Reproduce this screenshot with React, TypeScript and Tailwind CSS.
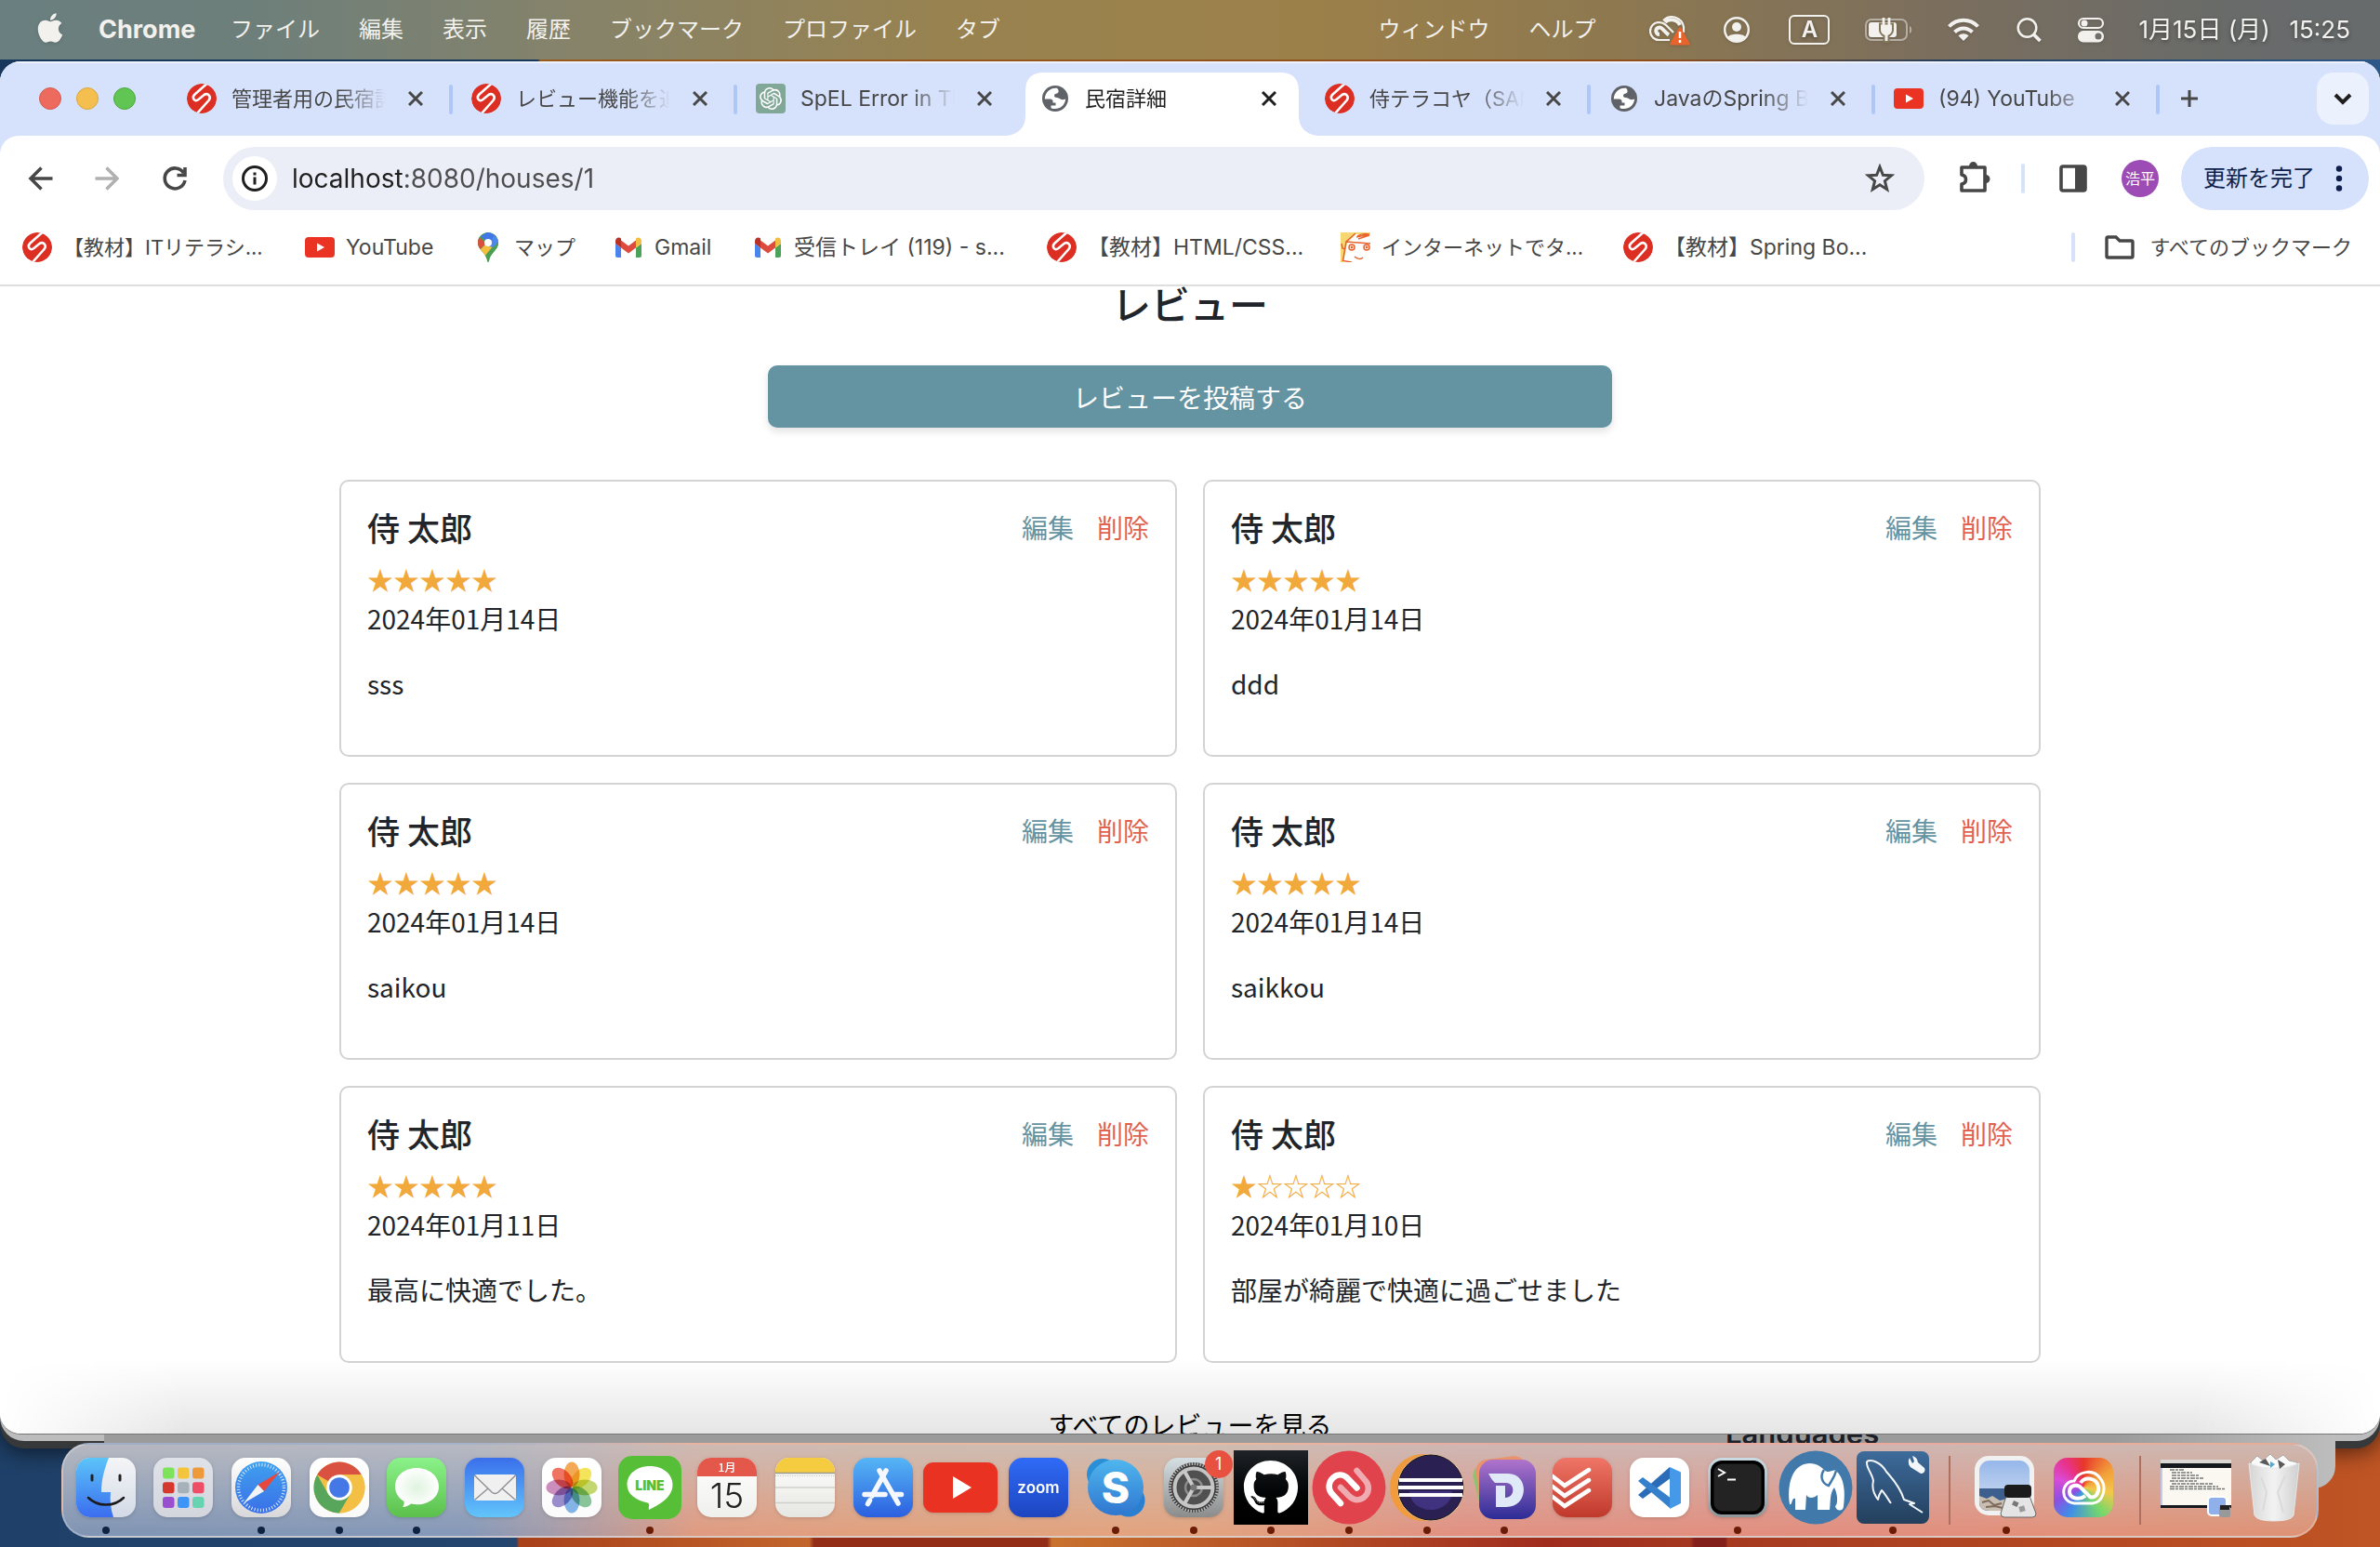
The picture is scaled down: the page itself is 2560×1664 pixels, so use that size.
import React from "react";
import { FaApple, FaGithub } from "react-icons/fa";
import { SiOpenai } from "react-icons/si";

const JP = "font-['Noto_Sans_CJK_JP',sans-serif]";
const UI = "font-[Inter,'Noto_Sans_CJK_JP',sans-serif]";

/* ---------- small icons ---------- */

const Samurai = () => (
  <svg viewBox="0 0 32 32" className="size-8 shrink-0">
    <clipPath id="sam"><circle cx="16" cy="16" r="16" /></clipPath>
    <g clipPath="url(#sam)">
      <circle cx="16" cy="16" r="16" fill="#dc2e22" />
      <path d="M21.500 0L8.500 11.500C5 15 8 20.500 12.500 17L18.500 12C23 9.500 26.500 14 23.500 18L11 32" fill="none" stroke="#fff" strokeWidth="2.600" />
    </g>
  </svg>
);

const YouTube = () => (
  <svg viewBox="0 0 32 32" className="size-8 shrink-0">
    <rect y="5" width="32" height="22" rx="4" fill="#eb3323" />
    <path d="M13 11.500v9l8-4.500z" fill="#fff" />
  </svg>
);

const OpenAi = () => (
  <span className="flex size-8 shrink-0 items-center justify-center rounded bg-[#81a798] text-2xl text-white"><SiOpenai /></span>
);

const Globe = () => (
  <svg viewBox="-2 -2 32 32" className="size-8 shrink-0">
    <circle cx="14" cy="14" r="14" fill="#5f6368" />
    <path d="M16 2.800C9 2 3 7 2.800 14.500H7.500C11 14.500 12 16 11.500 18.500H14.500V21.500H9.500V24.200C16.500 27 24.500 22.500 25.200 14.500C23 15.500 21 15.500 19.500 14.500C18 13 16 13.500 14.500 12.800C12.500 12.500 12.500 9 15 8.800C18 8.500 18.500 5.500 16 2.800Z" fill="#fff" />
  </svg>
);

const MapPin = () => (
  <svg viewBox="0 0 32 32" className="size-8 shrink-0">
    <clipPath id="pin"><path d="M16 0C10 0 5 4.700 5 11c0 4.500 2.500 7 5 10 3 3.500 4.500 6 5 9.500.3 2 1.700 2 2 0 .5-3.500 2-6 5-9.500 2.500-3 5-5.500 5-10C27 4.700 22 0 16 0z" /></clipPath>
    <g clipPath="url(#pin)">
      <rect width="32" height="32" fill="#4b9f53" />
      <path d="M4 22L23 3 27 8 12 26z" fill="#f4bf3f" />
      <path d="M4 3L14 12 6 19 3 16z" fill="#d9503f" />
      <path d="M8 4L16-1 26 4 16 12z" fill="#3f77e4" />
      <path d="M22 3L28 8 26 17 17 15z" fill="#4c87ee" />
      <path d="M27 10L12 27 20 32 30 18z" fill="#4b9f53" />
    </g>
    <circle cx="16" cy="11" r="4" fill="#fff" />
  </svg>
);

const GmailIcon = () => (
  <svg viewBox="0 0 32 32" className="size-8 shrink-0">
    <path d="M2 12l6 4.500V27H4a2 2 0 0 1-2-2z" fill="#4a84ee" />
    <path d="M30 12l-6 4.500V27h4a2 2 0 0 0 2-2z" fill="#4ba259" />
    <path d="M8 8.500l8 6 8-6v8l-8 6-8-6z" fill="#dd4b3e" />
    <path d="M2 9.500C2 6 5.500 4.500 8 6.500v10L2 12z" fill="#b93227" />
    <path d="M30 9.500C30 6 26.500 4.500 24 6.500v10L30 12z" fill="#f2bd42" />
  </svg>
);

const FaceIcon = () => (
  <svg viewBox="0 0 32 32" className="size-8 shrink-0">
    <rect width="32" height="32" fill="#f7d774" />
    <path d="M7 11L16 2H32V32H3z" fill="#fff" />
    <g fill="none" stroke="#e8642d" strokeWidth="1.500">
      <path d="M16 1L6 10 2.500 30.500 12 32M6 10L32 12M1 12l1 5 3 1" />
      <circle cx="12" cy="16" r="3" /><circle cx="28" cy="16" r="3" />
      <path d="M15 26c3 3 7 3 9 1M17 5l14-3M19 7l12-4M18 4c5-3 9-3 12-2" />
    </g>
    <circle cx="12" cy="16" r="1.400" fill="#e8642d" /><circle cx="28" cy="16" r="1.400" fill="#e8642d" />
  </svg>
);

const Stroke = ({ d, w = 4, className = "size-8 text-[#474747]", join = "miter" }: { d: string; w?: number; className?: string; join?: "miter" | "round" }) => (
  <svg viewBox="0 0 32 32" className={className} fill="none" stroke="currentColor" strokeWidth={w} strokeLinejoin={join}>
    <path d={d} />
  </svg>
);

/* ---------- menu bar ---------- */

const Menubar = () => (
  <header className={`${UI} flex h-16 shrink-0 items-center bg-[linear-gradient(90deg,#6a7f80_0%,#6e7f7a_11%,#86836a_24%,#98824f_40%,#9c804a_55%,#8d7850_68%,#7a6e5e_82%,#686b6a_94%,#686b6c_100%)] pr-8 pl-9 text-2xl text-[#f2f1ee] [text-shadow:0_2px_5px_rgba(0,0,0,0.3)]`}>
    <FaApple className="mb-1 size-9 drop-shadow" />
    <button className="ml-[34px] w-[102px] text-left text-[27px] font-bold">Chrome</button>
    <nav className="ml-10 flex gap-[42px]">
      {["ファイル", "編集", "表示", "履歴", "ブックマーク", "プロファイル", "タブ"].map((t) => <button key={t}>{t}</button>)}
    </nav>
    <nav className="ml-auto flex gap-[42px]">
      {["ウィンドウ", "ヘルプ"].map((t) => <button key={t}>{t}</button>)}
    </nav>
    <div className="ml-[58px] flex items-center drop-shadow">
      <svg viewBox="0 0 44 34" className="h-[34px] w-11" fill="none" stroke="currentColor">
        <path d="M22 28H11A9.500 9.500 0 0 1 10 9C13 9 16 10 18 12L26 20M15 7A13 13 0 0 1 37 14V20" strokeWidth="2.200" />
        <path d="M11 22C6 22 6 14.500 11 14.500C14 14.500 17 20 21 22.500M17 9C20 5 30 5 33 12" strokeWidth="4" />
        <path d="M33 16L42 32H24z" fill="#e8642c" stroke="#e8642c" strokeWidth="3" strokeLinejoin="round" />
        <path d="M33 19v7M33 28v3" stroke="#fff" strokeWidth="2.500" />
      </svg>
      <svg viewBox="0 0 28 28" className="ml-9 size-7">
        <circle cx="14" cy="14" r="12.800" fill="none" stroke="currentColor" strokeWidth="2.400" />
        <circle cx="14" cy="11" r="5" fill="currentColor" />
        <path d="M4 22C7 17.500 21 17.500 24 22C19 28.500 9 28.500 4 22Z" fill="currentColor" />
      </svg>
      <span className="ml-[42px] flex h-8 w-11 items-center justify-center rounded-md border-2 border-current text-2xl font-semibold">A</span>
      <svg viewBox="0 0 52 28" className="ml-[38px] h-7 w-[52px]" fill="none" stroke="currentColor">
        <rect x="1" y="3" width="44" height="22" rx="6" strokeWidth="2" opacity=".5" />
        <rect x="4" y="6" width="30" height="16" rx="3" fill="currentColor" stroke="none" />
        <path d="M48 10c3 1 3 7 0 8z" fill="currentColor" stroke="none" opacity=".5" />
        <path d="M17 8.500h12v6c0 3-3 5-4.500 5.500V26h-3v-6C20 19.500 17 17.500 17 14.500z" fill="#84765a" stroke="#84765a" strokeWidth="4" />
        <path d="M20 1v8M26 1v8" strokeWidth="2.800" />
        <path d="M17 8.500h12v6c0 3-3 5-4.500 5.500V26h-3v-6C20 19.500 17 17.500 17 14.500z" fill="currentColor" stroke="none" />
      </svg>
      <svg viewBox="0 0 36 26" className="ml-[36px] h-[26px] w-9" fill="none" stroke="currentColor" strokeWidth="4">
        <path d="M2.500 9.500C11 .500 25 .500 33.500 9.500M8.500 15.500c5.500-5.500 13.500-5.500 19 0" />
        <path d="M12.500 19.500c3-3 8-3 11 0L18 25z" fill="currentColor" stroke="none" />
      </svg>
      <svg viewBox="0 0 28 28" className="ml-[38px] size-7" fill="none" stroke="currentColor">
        <circle cx="12.500" cy="12" r="9.800" strokeWidth="2.500" /><path d="M19.500 19l7 7" strokeWidth="3.800" />
      </svg>
      <svg viewBox="0 0 30 28" className="ml-[38px] h-7 w-[30px]">
        <rect x="2" y="2" width="26" height="10" rx="5" fill="none" stroke="currentColor" strokeWidth="2.200" />
        <circle cx="8" cy="7" r="3.500" fill="currentColor" />
        <rect x="1" y="15" width="28" height="12.500" rx="6" fill="currentColor" />
        <circle cx="23" cy="21" r="3.500" fill="#72706a" />
      </svg>
      <span className="ml-9 w-[146px] whitespace-nowrap text-[26px]">1月15日 (月)</span>
      <span className="ml-4 text-[26px]">15:25</span>
    </div>
  </header>
);

/* ---------- browser chrome ---------- */

type Tab = { icon: React.ReactNode; title: string; active?: boolean; sep?: boolean; latin?: boolean };
const tabs: Tab[] = [
  { icon: <Samurai />, title: "管理者用の民宿詳細", sep: true },
  { icon: <Samurai />, title: "レビュー機能を追加", sep: true },
  { icon: <OpenAi />, title: "SpEL Error in Thymeleaf", latin: true },
  { icon: <Globe />, title: "民宿詳細", active: true },
  { icon: <Samurai />, title: "侍テラコヤ（SAMURAI", sep: true },
  { icon: <Globe />, title: "JavaのSpring Boot", sep: true, latin: true },
  { icon: <YouTube />, title: "(94) YouTube", sep: true, latin: true },
];

const TabItem = ({ t }: { t: Tab }) => (
  <div className={`relative flex w-[306px] min-w-0 items-center self-stretch ${t.active ? "text-[#1f1f1f]" : "text-[#474747]"}`}>
    {t.active && (
      <svg viewBox="0 0 334 68" className="absolute -left-4 top-3 h-[68px] w-[334px]" fill="#fff">
        <path d="M0 68C14 66 20 58 20 46V20Q20 0 40 0H294Q314 0 314 20V46C314 58 320 66 334 68Z" />
      </svg>
    )}
    <button className="relative flex h-14 min-w-0 flex-1 items-center gap-4 pl-5 text-left">
      {t.icon}
      <span className={`w-[166px] overflow-hidden whitespace-nowrap [mask-image:linear-gradient(90deg,#000_70%,transparent_100%)] ${t.latin ? "text-[23px]" : "text-[22px]"}`}>{t.title}</span>
    </button>
    <button aria-label="閉じる" className="relative mr-8"><Stroke d="M2 2L30 30M30 2L2 30" w={6} className="size-4" /></button>
    {t.sep && <span className="absolute right-0 top-[25px] h-8 w-1 rounded bg-[#aec7f7]" />}
  </div>
);

const TabStrip = () => (
  <div className="flex h-20 shrink-0 items-center bg-[#d6e1fb] pr-3 shadow-[inset_0_2px_0_#eef2fd]">
    <div className="flex w-[181px] shrink-0 gap-4 pl-[42px]">
      <button aria-label="閉じる" className="size-6 rounded-full border border-[#d65a50] bg-[#ed6a5e]" />
      <button aria-label="しまう" className="size-6 rounded-full border border-[#d9a73f] bg-[#f5bf4f]" />
      <button aria-label="拡大" className="size-6 rounded-full border border-[#4ea73f] bg-[#61c554]" />
    </div>
    {tabs.map((t) => <TabItem key={t.title} t={t} />)}
    <button aria-label="新しいタブ" className="ml-5"><Stroke d="M16 4V28M4 16H28" w={4} className="size-6 text-[#474747]" /></button>
    <button aria-label="タブを検索" className="ml-auto flex size-14 items-center justify-center rounded-[18px] bg-[#ecf2fd] text-[#1f1f1f]">
      <Stroke d="M8 12L16 20L24 12" w={4} className="size-8" />
    </button>
  </div>
);

const Toolbar = () => (
  <div className="bg-[#d6e1fb]">
    <div className="flex h-[92px] items-center rounded-t-[20px] bg-white pr-3 pl-7 text-[#474747]">
      <button aria-label="戻る"><Stroke d="M28.500 16H6M16.500 4.500L5 16L16.500 27.500" w={3.500} /></button>
      <button aria-label="進む" className="ml-[39px]"><Stroke d="M3.500 16H26M15.500 4.500L27 16L15.500 27.500" w={3.500} className="size-8 text-[#b0b0b0]" /></button>
      <button aria-label="再読み込み" className="ml-[41px]"><Stroke d="M25.500 10A11 11 0 1 0 27 18M27 4V12.500H18.500" w={3.600} /></button>
      <div className="ml-9 flex h-[68px] flex-1 items-center rounded-full bg-[#ebeef7] pr-8 pl-[10px]">
        <button aria-label="サイト情報" className="flex size-12 shrink-0 items-center justify-center rounded-full bg-white text-[#1f1f1f]">
          <svg viewBox="0 0 28 28" className="size-7" fill="none" stroke="currentColor" strokeWidth="3">
            <circle cx="14" cy="14" r="12.500" /><path d="M14 12.500v8M14 7.500v3" />
          </svg>
        </button>
        <input aria-label="アドレス" defaultValue="localhost:8080/houses/1" className="ml-4 h-12 flex-1 bg-[linear-gradient(90deg,#1f1f1f_120px,#4d4d50_120px)] bg-clip-text text-[28px] text-transparent outline-none" />
        <button aria-label="ブックマークに追加"><Stroke d="M16 3.500L19.400 12.200L28.500 12.700L21.400 18.700L23.700 27.700L16 22.800L8.300 27.700L10.600 18.700L3.500 12.700L12.600 12.200Z" w={3} /></button>
      </div>
      <button aria-label="拡張機能" className="ml-8">
        <svg viewBox="0 0 40 40" className="size-10">
          <path d="M8 8H33V33H8V26C14 25 14 17 8 16Z" fill="none" stroke="currentColor" strokeWidth="3.600" strokeLinejoin="round" />
          <path d="M16 7a4.500 5 0 0 1 9 0zM34 16a4.500 4.500 0 0 1 0 9z" fill="currentColor" />
        </svg>
      </button>
      <span className="ml-8 h-8 w-1 rounded bg-[#d6e1fb]" />
      <button aria-label="サイドパネル" className="ml-[37px]">
        <svg viewBox="0 0 30 30" className="size-[30px]"><rect x="2" y="2" width="26" height="26" rx="2" fill="none" stroke="currentColor" strokeWidth="3.600" /><path d="M17 2h11v26H17z" fill="currentColor" /></svg>
      </button>
      <button className="ml-[37px] flex size-10 items-center justify-center rounded-full bg-[#9c4cb4] text-[16px] text-white">浩平</button>
      <button className="ml-6 flex h-[68px] w-[202px] items-center rounded-full bg-[#d6e1fb] pl-6 text-2xl text-[#0f1f4b]">
        更新を完了
        <svg viewBox="0 0 8 28" className="ml-[22px] h-7 w-2" fill="currentColor"><circle cx="4" cy="3.500" r="3.200" /><circle cx="4" cy="14" r="3.200" /><circle cx="4" cy="24.500" r="3.200" /></svg>
      </button>
    </div>
  </div>
);

const bookmarks = [
  { icon: <Samurai />, t: "【教材】ITリテラシ...", w: "w-[262px]" },
  { icon: <YouTube />, t: "YouTube", w: "w-[139px] text-[23px]" },
  { icon: <MapPin />, t: "マップ", w: "w-[109px]" },
  { icon: <GmailIcon />, t: "Gmail", w: "w-[108px] text-[23px]" },
  { icon: <GmailIcon />, t: "受信トレイ (119) - s...", w: "w-[274px] text-[23px]" },
  { icon: <Samurai />, t: "【教材】HTML/CSS...", w: "w-[274px] text-[23px]" },
  { icon: <FaceIcon />, t: "インターネットでタ...", w: "w-[262px]" },
  { icon: <Samurai />, t: "【教材】Spring Bo...", w: "w-[262px] text-[23px]" },
];

const Bookmarks = () => (
  <nav className="flex h-[70px] shrink-0 items-center gap-[42px] border-b-2 border-[#dfdfdf] bg-white pr-[30px] pb-3 pl-6 text-[22px] text-[#474747]">
    {bookmarks.map((b) => (
      <a key={b.t} href="#" className={`flex items-center gap-3 whitespace-nowrap ${b.w}`}>{b.icon}<span>{b.t}</span></a>
    ))}
    <div className="ml-auto flex items-center">
      <span className="h-8 w-1 rounded bg-[#d6e1fb]" />
      <button className="ml-8 flex items-center gap-4">
        <Stroke d="M2 6.500Q2 5 3.500 5H12L16 9H28.500Q30 9 30 10.500V25.500Q30 27 28.500 27H3.500Q2 27 2 25.500Z" w={3.400} />
        すべてのブックマーク
      </button>
    </div>
  </nav>
);

/* ---------- page ---------- */

const reviews = [
  { stars: 5, date: "2024年01月14日", text: "sss" },
  { stars: 5, date: "2024年01月14日", text: "ddd" },
  { stars: 5, date: "2024年01月14日", text: "saikou" },
  { stars: 5, date: "2024年01月14日", text: "saikkou" },
  { stars: 5, date: "2024年01月11日", text: "最高に快適でした。" },
  { stars: 1, date: "2024年01月10日", text: "部屋が綺麗で快適に過ごせました" },
];

const Page = () => (
  <main className={`${JP} relative min-h-0 flex-1 overflow-hidden bg-white text-[28px] leading-[42px] text-[#212529]`}>
    <div className="mx-auto flex max-w-[1830px] flex-col items-center">
      <h2 className="mt-[-7px] text-[42px] leading-[50px] font-medium">レビュー</h2>
      <button className="mt-[42px] h-[67px] w-[908px] rounded-[10px] bg-[#6493a1] text-white shadow-[0_4px_8px_rgba(0,0,0,0.12)]">レビューを投稿する</button>
      <div className="mt-14 grid w-full grid-cols-2 gap-x-7 gap-y-[28px]">
        {reviews.map((r, i) => (
          <article key={i} className="rounded-[10px] border-2 border-[#d3d3d4] px-[28px] pt-7 pb-14">
            <div className="flex items-center justify-between">
              <h3 className="text-[35px] font-medium">侍 太郎</h3>
              <div className="flex gap-[25px]">
                <a href="#" className="text-[#6493a1]">編集</a>
                <a href="#" className="text-[#e2624f]">削除</a>
              </div>
            </div>
            <p className="mt-3.5 text-[#f2a93b]">{"★".repeat(r.stars) + "☆".repeat(5 - r.stars)}</p>
            <p>{r.date}</p>
            <p className="mt-7">{r.text}</p>
          </article>
        ))}
      </div>
      <a href="#" className="mt-[45px] text-black">すべてのレビューを見る</a>
    </div>
    <div className="pointer-events-none absolute inset-x-0 bottom-0 h-20 bg-linear-to-t from-black/10 to-transparent [mask-image:linear-gradient(90deg,transparent,#000_200px,#000_calc(100%_-_200px),transparent)]" />
  </main>
);

/* ---------- dock ---------- */

const Svg = ({ children, id, c1, c2, shape = true }: { children?: React.ReactNode; id: string; c1: string; c2: string; shape?: boolean }) => (
  <svg viewBox="0 0 64 64" className="size-16 drop-shadow">
    <defs><linearGradient id={id} x2="0" y2="1"><stop stopColor={c1} /><stop offset="1" stopColor={c2} /></linearGradient>
      <clipPath id={id + "c"}><rect width="64" height="64" rx="15" /></clipPath></defs>
    {shape && <rect width="64" height="64" rx="15" fill={`url(#${id})`} />}
    <g clipPath={`url(#${id}c)`}>{children}</g>
  </svg>
);

const Finder = () => (
  <Svg id="fd" c1="#f4f5f7" c2="#d3dae6">
    <defs><linearGradient id="fdb" x2="0" y2="1"><stop stopColor="#5cc4f8" /><stop offset="1" stopColor="#3a6df0" /></linearGradient></defs>
    <path d="M0 0H35C30 13 27 24 27 37H37C36 46 37 55 40 64H0Z" fill="url(#fdb)" />
    <path d="M17 19v5M47 19v5" stroke="#222" strokeWidth="3" strokeLinecap="round" />
    <path d="M13 43C23 53 41 53 51 43" fill="none" stroke="#1c1c1e" strokeWidth="2.500" strokeLinecap="round" />
  </Svg>
);
const padColors = ["#7de35a", "#f3c53d", "#ee9a3a", "#d5382c", "#a6b1ba", "#ee4f66", "#9a4fd0", "#3f95f7", "#67d3b0"];
const Launchpad = () => (
  <Svg id="lp" c1="#dfe3e9" c2="#d3d6dd">
    {padColors.map((c, i) => <rect key={c} x={10 + (i % 3) * 16} y={10.500 + Math.floor(i / 3) * 15.800} width="12.500" height="12" rx="3" fill={c} />)}
  </Svg>
);
const Safari = () => (
  <Svg id="sf" c1="#fff" c2="#d8d8da">
    <defs><linearGradient id="sfb" x2="0" y2="1"><stop stopColor="#3fa1ee" /><stop offset="1" stopColor="#3a6fe8" /></linearGradient></defs>
    <circle cx="32" cy="32" r="28" fill="url(#sfb)" />
    <circle cx="32" cy="32" r="24.500" fill="none" stroke="#d8e9fb" strokeWidth="3.500" strokeDasharray="1 2.200" />
    <path d="M52 15L28.500 29L35 36Z" fill="#e8483c" /><path d="M13 49L28.500 29L35 36Z" fill="#f3f4f6" />
  </Svg>
);
const Chrome = () => (
  <Svg id="cr" c1="#fff" c2="#fafafa">
    <circle cx="32" cy="32" r="27.500" fill="#f3c045" />
    <path d="M32 32L8.200 18.200A27.500 27.500 0 0 1 55.800 18.200H32Z" fill="#d95140" />
    <path d="M8.200 18.200A27.500 27.500 0 0 0 32 59.500L44 39L32 32L20 39Z" fill="#57a65c" />
    <path d="M32 18.200H55.800A27.500 27.500 0 0 1 32 59.500L44 39Z" fill="#f3c045" />
    <circle cx="32" cy="32" r="13.800" fill="#fff" /><circle cx="32" cy="32" r="10.800" fill="#4378e6" />
  </Svg>
);
const Messages = () => (
  <Svg id="ms" c1="#8bf28a" c2="#5bc04c">
    <defs><radialGradient id="msb"><stop stopColor="#dff3df" /><stop offset="1" stopColor="#fff" /></radialGradient></defs>
    <path d="M32 11C18.500 11 9 20 9 31C9 38 13 43.500 18.500 47C19 50 18 52 17 53C21 53 24 51 26 49.500C42 53 56 44 56 31C56 20 46 11 32 11Z" fill="url(#msb)" />
  </Svg>
);
const Mail = () => (
  <Svg id="ml" c1="#3a6fec" c2="#62c5fa">
    <rect x="10" y="18" width="45" height="28" rx="3" fill="#f0f0f1" />
    <path d="M10.500 19L29 37Q32.500 40 36 37L54.500 19M11 45L25 33M54 45L40 33" fill="none" stroke="#8f8f93" strokeWidth="1.400" />
  </Svg>
);
const petals = ["#f29a38", "#f3df3f", "#b8d155", "#74b987", "#6ea7e2", "#8a79c3", "#c27ab0", "#ec5b47"];
const Photos = () => (
  <Svg id="ph" c1="#fff" c2="#fbfbfb">
    {petals.map((c, i) => <ellipse key={c} cx="32" cy="18" rx="8.500" ry="13.500" fill={c} opacity=".85" transform={`rotate(${i * 45} 32 32)`} className="mix-blend-multiply" />)}
  </Svg>
);
const Line = () => (
  <svg viewBox="0 0 68 68" className="size-[68px]">
    <rect width="68" height="68" rx="15" fill="#57be37" />
    <path d="M34 11C20 11 9.500 19.500 9.500 31C9.500 41 19 48 31.500 50.500C35 51.500 32 55 33 58C43 53 58.500 45 58.500 31C58.500 19.500 48 11 34 11Z" fill="#fff" />
    <text x="34" y="37" textAnchor="middle" fontFamily="Inter" fontWeight="900" fontSize="14" fill="#57be37">LINE</text>
  </svg>
);
const Calendar = () => (
  <Svg id="cl" c1="#fff" c2="#efefec">
    <rect width="64" height="20" fill="#e4584c" />
    <text x="32" y="15" textAnchor="middle" fontFamily="Noto Sans CJK JP" fontSize="12" fontWeight="500" fill="#fff">1月</text>
    <text x="32" y="54" textAnchor="middle" fontFamily="Inter" fontSize="37" fontWeight="300" fill="#222">15</text>
  </Svg>
);
const Notes = () => (
  <Svg id="nt" c1="#fff" c2="#e6e6e1">
    <rect width="64" height="16" fill="#f5cb40" />
    <path d="M0 16.500H64" stroke="#9a9a95" strokeWidth="1.500" /><path d="M0 19.500H64" stroke="#bbb" strokeDasharray="1 1.600" />
    <path d="M0 32H64M0 48.500H64" stroke="#cfcfcc" strokeWidth="1.500" />
  </Svg>
);
const AppStore = () => (
  <Svg id="as" c1="#56b6f5" c2="#2b5fe0">
    <g stroke="#f5f9ff" strokeWidth="5.500" strokeLinecap="round"><path d="M35 14L20 41M28 14L48 49M12 39.500H34M44 39.500H51.500M17.500 46L15.500 49.500" /></g>
  </Svg>
);
const YouTubeDock = () => (
  <svg viewBox="0 0 80 54" className="h-[54px] w-20 drop-shadow"><rect width="80" height="54" rx="11" fill="#ea3223" /><path d="M32 15v24l20-12z" fill="#fff" /></svg>
);
const Zoom = () => (
  <Svg id="zm" c1="#2f6bf7" c2="#1d45c0">
    <text x="32" y="37.500" textAnchor="middle" fontFamily="Inter" fontSize="17" fontWeight="600" fill="#fff">zoom</text>
  </Svg>
);
const Skype = () => (
  <svg viewBox="0 0 64 64" className="size-16">
    <defs><linearGradient id="sk" x2="0" y2="1"><stop stopColor="#4fb6ee" /><stop offset="1" stopColor="#2f76cf" /></linearGradient></defs>
    <circle cx="18" cy="18" r="17" fill="#2b8fd8" /><circle cx="46" cy="46" r="17.500" fill="#2b7fd0" />
    <circle cx="32" cy="32" r="30" fill="url(#sk)" />
    <text x="32" y="49" textAnchor="middle" fontFamily="Inter" fontSize="46" fontWeight="800" fill="#fff">S</text>
  </svg>
);
const Settings = () => (
  <Svg id="st" c1="#d5dfe3" c2="#8b8b8b">
    <circle cx="32" cy="32" r="27" fill="#3d3d3e" />
    <circle cx="32" cy="32" r="25.500" fill="none" stroke="#b9b9b9" strokeWidth="3" strokeDasharray="1.500 1.500" />
    <circle cx="32" cy="32" r="20.500" fill="#505050" stroke="#c4c4c4" strokeWidth="4" />
    <circle cx="32" cy="32" r="9" fill="none" stroke="#8d8d8d" strokeWidth="2.500" />
    <path d="M32 32H52M32 32L22 14.500M32 32L22 49.500" stroke="#c9c9c9" strokeWidth="4" /><circle cx="32" cy="32" r="3.500" fill="#777" />
  </Svg>
);
const GitHub = () => <span className="flex size-20 shrink-0 items-center justify-center bg-linear-to-b from-[#1f2428] to-black text-[60px] text-white"><FaGithub /></span>;
const Authy = () => (
  <svg viewBox="0 0 80 80" className="size-20 shrink-0"><circle cx="40" cy="40" r="39.500" fill="#e0434c" />
    <g fill="none" strokeWidth="6.500" strokeLinecap="round">
      <path d="M48.500 22L58 33C67 44 53 60 41 50L31 40" stroke="#efabb0" />
      <path d="M31 57L21 46C13 35 27 20 38 29.500L48.500 40.500" stroke="#fff" />
    </g>
  </svg>
);
const Eclipse = () => (
  <svg viewBox="0 0 80 72" className="h-[72px] w-20">
    <circle cx="36" cy="36" r="36" fill="#f09b3c" />
    <circle cx="44" cy="36" r="36" fill="#f3cba8" />
    <circle cx="44" cy="36" r="35" fill="#2b2052" stroke="#151515" />
    <path d="M21 40a23 20 0 0 0 46 0z" fill="#41327f" />
    <path d="M10 28H78M9 36H79M10 44H78" stroke="#fff" strokeWidth="4.200" />
  </svg>
);
const Dash = () => (
  <svg viewBox="0 0 68 70" className="h-[70px] w-[68px]">
    <defs><linearGradient id="da" x2="0" y2="1"><stop stopColor="#b074cc" /><stop offset="1" stopColor="#2c2c96" /></linearGradient></defs>
    <rect x="3" y="7" width="48" height="48" rx="12" fill="#8cc46c" transform="rotate(-14 27 31)" /><rect x="5" y="3" width="54" height="50" rx="12" fill="#e8936c" transform="rotate(-7 32 28)" />
    <rect x="7" y="5" width="61" height="64" rx="15" fill="url(#da)" />
    <path d="M17 20H38C61 20 61 56 36 56H25V33H35V46C46 46 46 30 36 30H24C21 27 19 24 17 20Z" fill="#e0e9f7" />
  </svg>
);
const Todoist = () => (
  <Svg id="td" c1="#ef7667" c2="#c0392b">
    <path d="M0 20L13 30L39 13M0 31L13 41L39 24M0 42L13 52L39 35" fill="none" stroke="#fff" strokeWidth="4.500" strokeLinecap="round" />
  </Svg>
);
const VsCode = () => (
  <Svg id="vs" c1="#fff" c2="#fff">
    <path d="M43 10L9 40L14 44L45 21Z" fill="#2a6cb8" /><path d="M43 54L9 25L14 21L45 44Z" fill="#3580cc" /><path d="M43 10L55 15.500V49L43 55Z" fill="#4599e8" />
  </Svg>
);
const Terminal = () => (
  <Svg id="tm" c1="#cbdbe3" c2="#8f9699">
    <rect x="3" y="3" width="58" height="58" rx="12" fill="#000" /><rect x="6.500" y="6.500" width="51" height="51" rx="9" fill="#232323" />
    <path d="M11 12l7 4-7 4M21 23.500h9" fill="none" stroke="#fff" strokeWidth="2" />
  </Svg>
);
const Mamp = () => (
  <svg viewBox="0 0 80 80" className="size-20 shrink-0"><circle cx="40" cy="40" r="39.500" fill="#4079aa" />
    <path d="M12 58C9 38 14 15 33 14C42 14 46 18 49 21C54 26 58 20 62 22C71 30 72 45 70 60C70 66 62 66 61 60C64 58 64 48 60 40C55 46 56 56 55 64H42V48C38 52 32 52 30 48L29 64H18V52C14 50 15 60 12 58Z" fill="#fff" />
    <path d="M49 21C44 28 47 36 54 38C56 34 60 30 62 22" fill="none" stroke="#4079aa" strokeWidth="2.500" />
  </svg>
);
const Workbench = () => (
  <svg viewBox="0 0 78 78" className="size-[78px] shrink-0">
    <defs><linearGradient id="wb" x2="0" y2="1"><stop stopColor="#3d6b9b" /><stop offset="1" stopColor="#233f5c" /></linearGradient></defs>
    <rect width="78" height="78" rx="8" fill="url(#wb)" />
    <path d="M11 11C17 8 27 13 32 22C42 33 48 42 51 52L62 56L57 57L71 66M11 11C10 18 17 24 18 32C16 40 20 48 23 52C24 46 26 44 27 42C31 46 34 52 37 56" fill="none" stroke="#f2f6fa" strokeWidth="2" strokeLinejoin="round" />
    <path d="M57 7a8 8 0 0 0 4 12l8 5a4 4 0 0 0 4-6l-7-6a8 8 0 0 0-6-7l2 6-2 2z" fill="#f2f6fa" />
  </svg>
);
const Preview = () => (
  <svg viewBox="0 0 68 68" className="size-[68px]">
    <defs><linearGradient id="pv" x2="0" y2="1"><stop stopColor="#96b7ea" /><stop offset=".6" stopColor="#bcd0ee" /></linearGradient></defs>
    <rect width="64" height="64" rx="15" fill="#f1f1f1" /><rect x="5" y="5" width="54" height="54" rx="11" fill="url(#pv)" />
    <path d="M5 35H59V50Q59 59 48 59H16Q5 59 5 50Z" fill="#3d5f8e" /><path d="M5 43l8 3 6-3 8 5 8-2v13H16Q5 59 5 50z" fill="#c9beb2" />
    <path d="M8 50l7-2 6 5 8-2M12 55l10-1 8 2" stroke="#7d6a5a" strokeWidth="2" fill="none" />
    <path d="M34 43H59L66 62Q66 66 62 66H32Q28 66 28 62Z" fill="#e4e4e4" stroke="#666" /><rect x="32" y="31" width="29" height="14" rx="4" fill="#1b1b1b" />
    <rect x="41" y="49" width="6" height="5" fill="#777" transform="rotate(25 44 51)" /><rect x="48" y="54" width="6" height="6" fill="#999" transform="rotate(-15 51 57)" />
  </svg>
);
const CreativeCloud = () => (
  <span className="flex size-16 items-center justify-center rounded-[15px] bg-[conic-gradient(#e8352b,#f2a03a_16%,#f4c84a_28%,#74d86a_40%,#3f8de8_58%,#8e4fe0_68%,#d94bd8_80%,#e8328a_90%,#e8352b)]">
    <svg viewBox="0 0 48 40" className="h-10 w-12" fill="none" stroke="#fff" strokeWidth="3">
      <path d="M34 37H14C-2 35 0 13 14 13C18 3 34-1 42 10C50 20 45 36 34 37Z" />
      <path d="M26 29C20 34 9 32 9 24.500C9 17 18 16 22 21L31 30C37 32 41 26 40 19C38 9 25 8 21 15" strokeWidth="4" />
    </svg>
  </span>
);
const Minimized = () => (
  <svg viewBox="0 0 78 64" className="h-16 w-[78px]">
    <rect y="2" width="76" height="52" fill="#fbf8f1" /><rect y="2" width="76" height="4" fill="#d9d6d4" /><rect y="6" width="76" height="5" fill="#15181c" /><rect y="51" width="76" height="3" fill="#15181c" /><rect y="11" width="2" height="40" fill="#c7c9e8" />
    <path d="M10 13h16M12 16h22M12 19h30M12 22h34M10 25h30M12 28h44M10 31h52M10 33.500h60" stroke="#777" strokeWidth="1.300" strokeDasharray="5 1 3 1" />
    <rect x="50" y="41" width="22" height="22" rx="5" fill="#fff" /><rect x="52" y="43" width="18" height="18" rx="3" fill="#8fb0e8" /><rect x="63" y="52" width="12" height="12" rx="2" fill="#999" /><rect x="64" y="51" width="10" height="5" fill="#222" />
  </svg>
);
const Trash = () => (
  <svg viewBox="0 0 56 74" className="h-[74px] w-14">
    <defs><linearGradient id="tr"><stop stopColor="#d5d5d5" /><stop offset=".5" stopColor="#f3f3f3" /><stop offset="1" stopColor="#cfcfcf" /></linearGradient></defs>
    <path d="M3 10L10 3L16 8L24 1L30 7L38 2L44 8L53 10L50 20H6Z" fill="#fafafa" stroke="#aaa" />
    <path d="M1 11Q28 22 55 11L49 67Q46 73 28 73T7 67Z" fill="url(#tr)" stroke="#e8e8e8" />
    <path d="M12 10l7-4 5 8zM32 7l8 5-6 5z" fill="#5a5a5a" /><path d="M24 9l5 3-5 4z" fill="#58a6c9" />
    <path d="M14 26l6 16-4 20M40 24l-8 18 6 22" stroke="#dadada" fill="none" strokeWidth="2" />
  </svg>
);

type App = { n: string; el: React.ReactNode; on?: boolean; badge?: string };
const groups: App[][] = [
  [
    { n: "Finder", el: <Finder />, on: true }, { n: "Launchpad", el: <Launchpad /> }, { n: "Safari", el: <Safari />, on: true },
    { n: "Chrome", el: <Chrome />, on: true }, { n: "メッセージ", el: <Messages />, on: true }, { n: "メール", el: <Mail /> },
    { n: "写真", el: <Photos /> }, { n: "LINE", el: <Line />, on: true }, { n: "カレンダー", el: <Calendar /> }, { n: "メモ", el: <Notes /> },
    { n: "App Store", el: <AppStore /> }, { n: "YouTube", el: <YouTubeDock /> }, { n: "Zoom", el: <Zoom /> }, { n: "Skype", el: <Skype />, on: true },
    { n: "システム設定", el: <Settings />, on: true, badge: "1" }, { n: "GitHub", el: <GitHub />, on: true }, { n: "Authy", el: <Authy />, on: true },
    { n: "Eclipse", el: <Eclipse />, on: true }, { n: "Dash", el: <Dash />, on: true }, { n: "Todoist", el: <Todoist /> }, { n: "VS Code", el: <VsCode /> },
    { n: "ターミナル", el: <Terminal />, on: true }, { n: "MAMP", el: <Mamp /> }, { n: "Workbench", el: <Workbench />, on: true },
  ],
  [{ n: "プレビュー", el: <Preview />, on: true }, { n: "Creative Cloud", el: <CreativeCloud /> }],
  [{ n: "ウィンドウ", el: <Minimized /> }, { n: "ゴミ箱", el: <Trash /> }],
];

const Dock = () => (
  <footer className="absolute inset-x-[66px] bottom-[10px] flex h-[102px] items-center rounded-[30px] border-2 border-white/25 bg-[linear-gradient(180deg,rgba(200,196,196,0.75),transparent),linear-gradient(90deg,#7e93b3_0%,#8598b8_18%,#a79ba8_22%,#e09a80_28%,#e2a07c_36%,#e3a37d_50%,#e29080_62%,#e38c7c_80%,#e39178_90%,#dd9274_100%)] px-1">
    {groups.map((g, gi) => (
      <React.Fragment key={gi}>
        {gi > 0 && <span className="mx-[18px] h-[74px] w-0.5 shrink-0 bg-[#b0705f]" />}
        {g.map((a) => (
          <button key={a.n} aria-label={a.n} className="relative flex h-full min-w-0 flex-1 items-center justify-center pb-1.5">
            <span className="flex shrink-0 justify-center">{a.el}</span>
            {a.badge && <span className="absolute right-0 top-1.5 flex size-[30px] items-center justify-center rounded-full bg-[#e8503f] font-[Inter] text-lg text-white">{a.badge}</span>}
            {a.on && <span className={`absolute bottom-0.5 size-2 rounded-full ${["Finder", "Safari", "Chrome", "メッセージ"].includes(a.n) ? "bg-[#0f2340]" : "bg-[#6b1c06]"}`} />}
          </button>
        ))}
      </React.Fragment>
    ))}
  </footer>
);

export default function App() {
  return (
    <div className="relative flex h-screen flex-col overflow-hidden bg-[linear-gradient(90deg,#1f4068_0%,#24456e_21.700%,#a8401a_21.800%,#c2652c_34%,#932d18_34.200%,#932d18_44%,#c8712e_44.200%,#a02c1e_65%,#a4371f_71%,#84201c_71.200%,#84201c_72.500%,#a63a20_72.600%,#bf5524_100%)]">
      <Menubar />
      <div className="relative flex min-h-0 flex-1 flex-col bg-[linear-gradient(90deg,#18375c_0%,#18375c_22.600%,#9a5a1c_22.700%,#8f4d1c_70%,#24405f_82%,#2c5788_100%)] bg-[length:100%_40px] bg-no-repeat pt-0.5 pb-[122px]">
        <div className="absolute inset-x-0 bottom-[106px] h-24 rounded-b-[26px] bg-[#36383a] shadow-[0_4px_24px_rgba(0,0,0,0.6)]" />
        <div className="absolute inset-x-0 bottom-[114px] h-24 rounded-b-[26px] bg-[#bcbcbc]" />
        <div className={`${UI} absolute right-12 bottom-[63px] left-28 h-24 rounded-b-[24px] bg-linear-to-r from-[#9b9b9b] from-90% to-[#bdbdbd] pt-[21px] pl-[1744px] text-[31px] leading-[32px] font-semibold text-[#1c2026]`}>Languages</div>
        <div className={`${UI} relative flex min-h-0 flex-1 flex-col overflow-hidden rounded-[22px] bg-white shadow-[0_1px_0_#777]`}>
          <TabStrip />
          <Toolbar />
          <Bookmarks />
          <Page />
        </div>
      </div>
      <Dock />
    </div>
  );
}
